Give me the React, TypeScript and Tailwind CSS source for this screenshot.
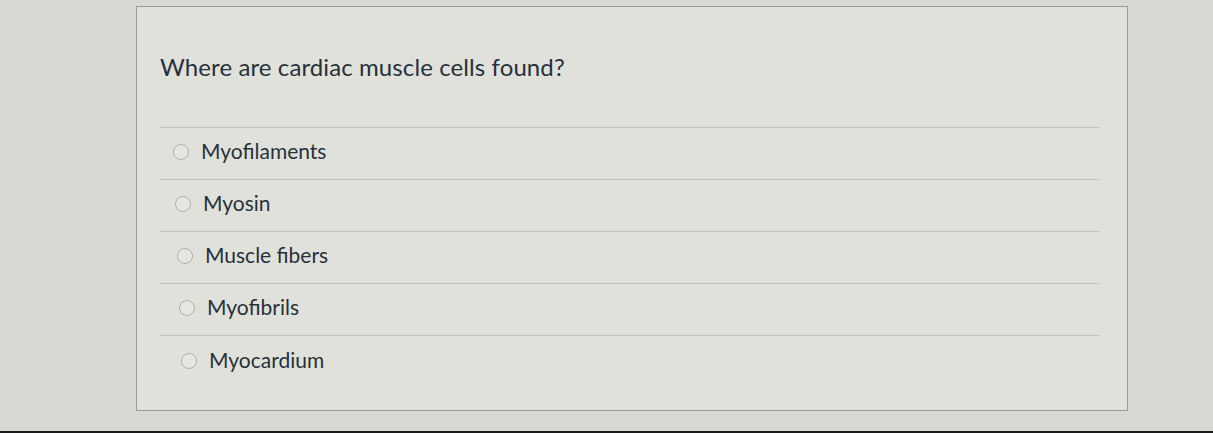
import React from "react";

const options = [
  { label: "Myofilaments", pl: "pl-[13px]" },
  { label: "Myosin", pl: "pl-[15px]" },
  { label: "Muscle fibers", pl: "pl-[17px]" },
  { label: "Myofibrils", pl: "pl-[19px]" },
  { label: "Myocardium", pl: "pl-[21px]" },
];

export default function App() {
  return (
    <div
      className="w-[1213px] h-[433px] overflow-hidden bg-[#d9d9d3] flex flex-col"
      style={{ fontFamily: "Lato, 'Open Sans', sans-serif" }}
    >
      <div className="flex-1 pl-[136px] pt-[6px]">
        <div className="w-[992px] h-[405px] border border-[#9c9c9a] bg-[#e1e1db] flex flex-col pl-[23px] pr-[28px]">
          <div className="pt-[45px] text-[24px] leading-[30px] text-[#26313b] tracking-[0.1px]">
            Where are cardiac muscle cells found?
          </div>
          <div className="mt-[45px] border-t border-[#c2c2bd]">
            {options.map((o) => (
              <div
                key={o.label}
                className={`h-[52px] flex items-center gap-[12px] border-b border-[#c2c2bd] last:border-b-0 ${o.pl}`}
              >
                <span className="w-[16px] h-[16px] rounded-full border border-[#b0b0ac] bg-[#e6e6e1] shrink-0 mt-[-3px]" />
                <span className="text-[21px] leading-[24px] text-[#26313b] mt-[-5px]">{o.label}</span>
              </div>
            ))}
          </div>
        </div>
      </div>
      <div className="h-[2px] bg-[#1a1a1a]" />
    </div>
  );
}
